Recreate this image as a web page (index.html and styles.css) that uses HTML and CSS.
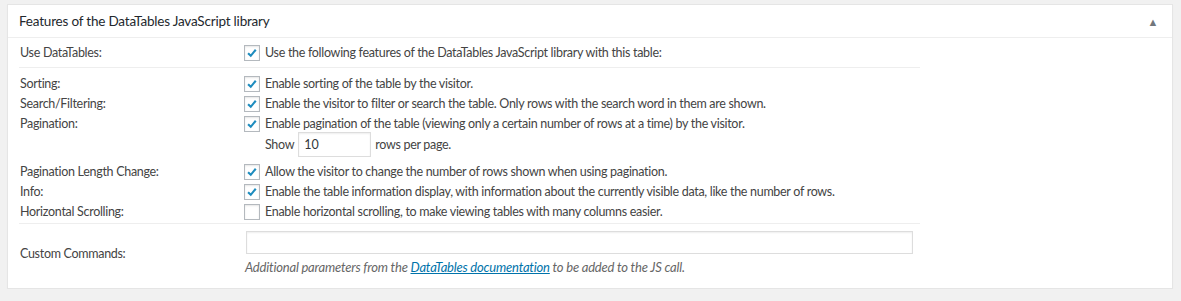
FILE: index.html
```html
<!DOCTYPE html>
<html lang="en">
<head>
    <meta charset="UTF-8">
    <title>Table Options</title>
    <link rel="stylesheet" href="styles.css">
</head>
<body>
    <div class="postbox">
        <div class="postbox-header">
            <h2 class="hndle">Features of the DataTables JavaScript library</h2>
            <span class="toggle">&#9650;</span>
        </div>
        <div class="inside">
            <div class="section">
                <div class="opt-row">
                    <div class="opt-label">Use DataTables:</div>
                    <label class="opt-field">
                        <span class="cb checked"><svg viewBox="0 0 16 16"><path d="M3.5 8.2 L6.6 11.2 L12.3 4.3"/></svg></span>
                        Use the following features of the DataTables JavaScript library with this table:
                    </label>
                </div>
            </div>
            <div class="section group">
                <div class="opt-row">
                    <div class="opt-label">Sorting:</div>
                    <label class="opt-field">
                        <span class="cb checked"><svg viewBox="0 0 16 16"><path d="M3.5 8.2 L6.6 11.2 L12.3 4.3"/></svg></span>
                        Enable sorting of the table by the visitor.
                    </label>
                </div>
                <div class="opt-row">
                    <div class="opt-label">Search/Filtering:</div>
                    <label class="opt-field">
                        <span class="cb checked"><svg viewBox="0 0 16 16"><path d="M3.5 8.2 L6.6 11.2 L12.3 4.3"/></svg></span>
                        Enable the visitor to filter or search the table. Only rows with the search word in them are shown.
                    </label>
                </div>
                <div class="opt-row">
                    <div class="opt-label">Pagination:</div>
                    <div>
                        <label class="opt-field">
                            <span class="cb checked"><svg viewBox="0 0 16 16"><path d="M3.5 8.2 L6.6 11.2 L12.3 4.3"/></svg></span>
                            Enable pagination of the table (viewing only a certain number of rows at a time) by the visitor.
                        </label>
                        <div class="show-row">
                            Show <input type="text" class="small-input" value="10"> rows per page.
                        </div>
                    </div>
                </div>
                <div class="opt-row">
                    <div class="opt-label">Pagination Length Change:</div>
                    <label class="opt-field">
                        <span class="cb checked"><svg viewBox="0 0 16 16"><path d="M3.5 8.2 L6.6 11.2 L12.3 4.3"/></svg></span>
                        Allow the visitor to change the number of rows shown when using pagination.
                    </label>
                </div>
                <div class="opt-row">
                    <div class="opt-label">Info:</div>
                    <label class="opt-field">
                        <span class="cb checked"><svg viewBox="0 0 16 16"><path d="M3.5 8.2 L6.6 11.2 L12.3 4.3"/></svg></span>
                        Enable the table information display, with information about the currently visible data, like the number of rows.
                    </label>
                </div>
                <div class="opt-row">
                    <div class="opt-label">Horizontal Scrolling:</div>
                    <label class="opt-field">
                        <span class="cb"></span>
                        Enable horizontal scrolling, to make viewing tables with many columns easier.
                    </label>
                </div>
            </div>
            <div class="section last">
                <div class="opt-row center">
                    <div class="opt-label">Custom Commands:</div>
                    <div>
                        <input type="text" class="large-input">
                        <p class="description">Additional parameters from the <a href="#">DataTables documentation</a> to be added to the JS call.</p>
                    </div>
                </div>
            </div>
        </div>
    </div>
</body>
</html>
```

FILE: styles.css
```css
body {
  margin: 0;
  padding: 4px 8px 0 7px;
  background: #f1f1f1;
  font-family: 'Lato', sans-serif;
  font-size: 12.5px;
  letter-spacing: -0.3px;
  color: #444;
}

.postbox {
  background: #fff;
  border: 1px solid #e5e5e5;
  box-shadow: 0 1px 1px rgba(0, 0, 0, 0.04);
  height: 283px;
}

.postbox-header {
  display: flex;
  justify-content: space-between;
  align-items: center;
  height: 32px;
  border-bottom: 1px solid #eee;
  padding: 0 12px 0 11px;
}

.hndle {
  margin: 0;
  font-size: 13.5px;
  font-weight: normal;
  letter-spacing: -0.2px;
  color: #23282d;
}

.toggle {
  font-size: 11px;
  color: #72777c;
  padding-right: 2px;
}

.inside {
  padding: 0 12px 0 11px;
  width: 901px;
}

.section {
  border-bottom: 1px solid #eee;
}

.section:first-child {
  padding: 5px 0 4px;
}

.section.group {
  padding: 6px 0 1px;
}

.section.last {
  border-bottom: none;
  padding: 7px 0 0;
}

.opt-row {
  display: grid;
  grid-template-columns: 225px 1fr;
  line-height: 20px;
}

.opt-row.center {
  align-items: center;
}

.opt-label {
  padding-left: 1px;
}

.opt-field {
  display: flex;
  align-items: center;
  gap: 5px;
  cursor: pointer;
}

.cb {
  display: inline-block;
  width: 14px;
  height: 14px;
  border: 1px solid #b4b9be;
  background: #fff;
  box-shadow: inset 0 1px 2px rgba(0, 0, 0, 0.1);
  flex: none;
}

.cb svg {
  display: block;
  width: 14px;
  height: 14px;
  fill: none;
  stroke: #1e8cbe;
  stroke-width: 2.4;
}

.show-row {
  display: flex;
  align-items: center;
  gap: 4px;
  margin-top: -2px;
  padding: 0 0 5px 21px;
}

.small-input {
  width: 73px;
  height: 25px;
  box-sizing: border-box;
  margin: 0;
  padding: 0 5px;
  border: 1px solid #ddd;
  box-shadow: inset 0 1px 2px rgba(0, 0, 0, 0.07);
  font: inherit;
  color: #32373c;
}

.large-input {
  display: block;
  width: 667px;
  height: 23px;
  box-sizing: border-box;
  margin: 0 0 0 2px;
  border: 1px solid #ddd;
  box-shadow: inset 0 1px 2px rgba(0, 0, 0, 0.07);
  font: inherit;
}

.description {
  margin: 3px 0 0 1px;
  font-style: italic;
  font-size: 13px;
  letter-spacing: -0.2px;
  color: #666;
  line-height: 20px;
}

.description a {
  color: #0073aa;
}
```
